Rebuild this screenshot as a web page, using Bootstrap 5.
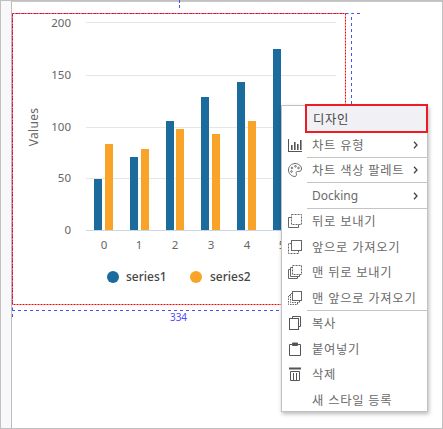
<!DOCTYPE html>
<html lang="ko"><head><meta charset="utf-8">
<link href="https://cdn.jsdelivr.net/npm/bootstrap@5.3.0/dist/css/bootstrap.min.css" rel="stylesheet">
<style>
html,body{margin:0;background:#fff;overflow:hidden}
body{font-family:"Noto Sans","Noto Sans CJK KR",sans-serif}
.frame{width:443px;height:429px;border:1px solid #c0c0c0;position:relative;box-shadow:inset 0 1px 0 #c8c8c8}
.rail{width:10px;background:#f8f8fb;border-right:1px solid #bdbdbd;box-sizing:content-box}
.stage{position:relative}
.chart{position:absolute;left:-1px;top:-1px;width:442px;height:429px}
.chart text{font-family:"Noto Sans",sans-serif}
.cmenu{position:absolute;left:280px;top:104px;width:147px;height:307px;display:block;margin:0;padding:0;background:#fff;border:1px solid #c2c2c2;border-radius:0;box-shadow:1px 2px 4px rgba(0,0,0,.28);list-style:none;min-width:0}
.cmenu li{height:25.5px;display:flex;align-items:center;position:relative;font:12.3px "Noto Sans CJK KR","Noto Sans",sans-serif;color:#6a6a6a;letter-spacing:.7px;padding-left:30px;white-space:nowrap}
.cmenu li.rule::after{content:"";position:absolute;left:25px;right:0;bottom:0;height:1px;background:#c4c4c4}
.cmenu li .ico{position:absolute;left:6px;top:50%;transform:translateY(-50%);width:14px;height:14px}
.cmenu li .chev{position:absolute;right:9px;top:50%;transform:translateY(-50%);width:5px;height:8px}
.cmenu li.hot{position:absolute;left:23px;top:-2px;width:123px;height:29px;background:#f0f0f5;border:2px solid #ed1c24;padding:0 0 0 6px;color:#444;z-index:2}
.cmenu li.latin{font:12px "Noto Sans",sans-serif;letter-spacing:0}
.cmenu li.spacer{height:26px}
</style></head><body>
<div class="frame d-flex">
<div class="rail flex-shrink-0"></div>
<div class="stage flex-grow-1"></div>
<svg class="chart" viewBox="0 0 442 429">
<g stroke="#e6e6e6" stroke-width="1"><path d="M86 22.500H336M86 75.500H336M86 127.500H336M86 178.500H336"/></g>
<path d="M86 230.500H336" stroke="#c9d6e6"/>
<g fill="#1b6b9c"><rect x="94" y="179" width="8" height="51"/><rect x="130" y="157" width="8" height="73"/><rect x="166" y="121" width="8" height="109"/><rect x="201" y="97" width="8" height="133"/><rect x="237" y="82" width="8" height="148"/><rect x="273" y="49" width="8" height="181"/></g>
<g fill="#f9a428"><rect x="105" y="144" width="8" height="86"/><rect x="141" y="149" width="8" height="81"/><rect x="176" y="129" width="8" height="101"/><rect x="212" y="134" width="8" height="96"/><rect x="248" y="121" width="8" height="109"/></g>
<g font-size="11.500" fill="#666" text-anchor="end"><text x="71" y="27">200</text><text x="71" y="79">150</text><text x="71" y="131">100</text><text x="71" y="182">50</text><text x="71" y="234">0</text></g>
<g font-size="11.500" fill="#666" text-anchor="middle"><text x="104" y="249">0</text><text x="139" y="249">1</text><text x="175" y="249">2</text><text x="211" y="249">3</text><text x="247" y="249">4</text><text x="282" y="249">5</text></g>
<text transform="translate(38 127) rotate(-90)" font-size="12" fill="#666" text-anchor="middle" letter-spacing=".3">Values</text>
<circle cx="113" cy="277" r="6" fill="#1b6b9c"/><circle cx="196" cy="277" r="6" fill="#f9a428"/>
<text x="126" y="281" font-size="12" font-weight="500" fill="#444">series1</text><text x="210" y="281" font-size="12" font-weight="500" fill="#444">series2</text>
<g fill="none" stroke-width="1">
<path d="M360 13.500H351.500V310.500H12.500V319M12.500 310.500V13.500H351.500" stroke="#4d4dff" stroke-dasharray="3 3"/>
<path d="M179.500 0V10" stroke="#4d4dff" stroke-dasharray="3 2"/>
<path d="M12.500 13.500H345.500V304.500H12.500Z" stroke="#ff0000" stroke-dasharray="2 1"/>
</g>
<text x="178.500" y="321" font-size="10" fill="#4d4dff" text-anchor="middle">334</text>
</svg>
<ul class="cmenu dropdown-menu">
<li class="hot">디자인</li>
<li class="spacer"></li>
<li class="rule">차트 유형
<svg class="ico" viewBox="0 0 14 14" fill="#555"><path d="M0 1h1v12h13v1H0z"/><path d="M3 7h1.600v5H3zM6 4h1.600v8H6zM9 6h1.600v6H9zM12 2h1.600v10H12z"/></svg>
<svg class="chev" viewBox="0 0 5 8" fill="none" stroke="#444" stroke-width="1.300"><path d="M1 .8 4 4 1 7.200"/></svg></li>
<li class="rule">차트 색상 팔레트
<svg class="ico" viewBox="0 0 14 14" fill="none" stroke="#666"><path d="M7 .5c3.600 0 6.500 2.400 6.500 5.500 0 2.500-2.500 2.500-4 2.500-1.300 0-1.800 1-1.200 2 .6 1.200-.2 3-1.300 3C3.500 13.500.5 10.500.5 7S3.500.5 7 .5z"/><circle cx="4" cy="5" r=".8"/><circle cx="7.500" cy="3.300" r=".8"/><circle cx="10.500" cy="5" r=".8"/><circle cx="3.500" cy="8.500" r=".8"/></svg>
<svg class="chev" viewBox="0 0 5 8" fill="none" stroke="#444" stroke-width="1.300"><path d="M1 .8 4 4 1 7.200"/></svg></li>
<li class="rule latin">Docking
<svg class="chev" viewBox="0 0 5 8" fill="none" stroke="#444" stroke-width="1.300"><path d="M1 .8 4 4 1 7.200"/></svg></li>
<li>뒤로 보내기
<svg class="ico" viewBox="0 0 14 14" fill="none" stroke="#666"><rect x="3.500" y=".5" width="10" height="10" stroke-dasharray="2 1"/><path d="M3.500 3.500H.5v10h10v-3"/></svg></li>
<li>앞으로 가져오기
<svg class="ico" viewBox="0 0 14 14" fill="none" stroke="#666"><rect x="3.500" y=".5" width="10" height="10"/><path d="M3.500 3.500H.5v10h10v-3" stroke-dasharray="2 1"/></svg></li>
<li>맨 뒤로 보내기
<svg class="ico" viewBox="0 0 14 14" fill="none" stroke="#666"><rect x="4.500" y=".5" width="9" height="9" stroke-dasharray="2 1"/><path d="M4.500 2.500h-2v9h9v-2M2.500 4.500h-2v9h9v-2"/></svg></li>
<li class="rule">맨 앞으로 가져오기
<svg class="ico" viewBox="0 0 14 14" fill="none" stroke="#666"><rect x="4.500" y=".5" width="9" height="9"/><path d="M4.500 2.500h-2v9h9v-2M2.500 4.500h-2v9h9v-2" stroke-dasharray="1.500 1"/></svg></li>
<li>복사
<svg class="ico" viewBox="0 0 14 14" fill="none" stroke="#555"><rect x="1.500" y="2.500" width="9" height="11"/><path d="M4.500 2.500v-2h8v10h-2"/></svg></li>
<li>붙여넣기
<svg class="ico" viewBox="0 0 14 14" fill="none" stroke="#555"><path d="M4 2.500H1.500v11h11v-11H10"/><path d="M4.500 3.500h5V1h-5z" fill="#555"/></svg></li>
<li>삭제
<svg class="ico" viewBox="0 0 14 14" fill="none" stroke="#555"><path d="M1 1.500h12" stroke-width="2"/><path d="M2.500 4.500h9v9h-9zM5.500 6v7M8.500 6v7"/></svg></li>
<li>새 스타일 등록</li>
</ul>
</div>
</body></html>
